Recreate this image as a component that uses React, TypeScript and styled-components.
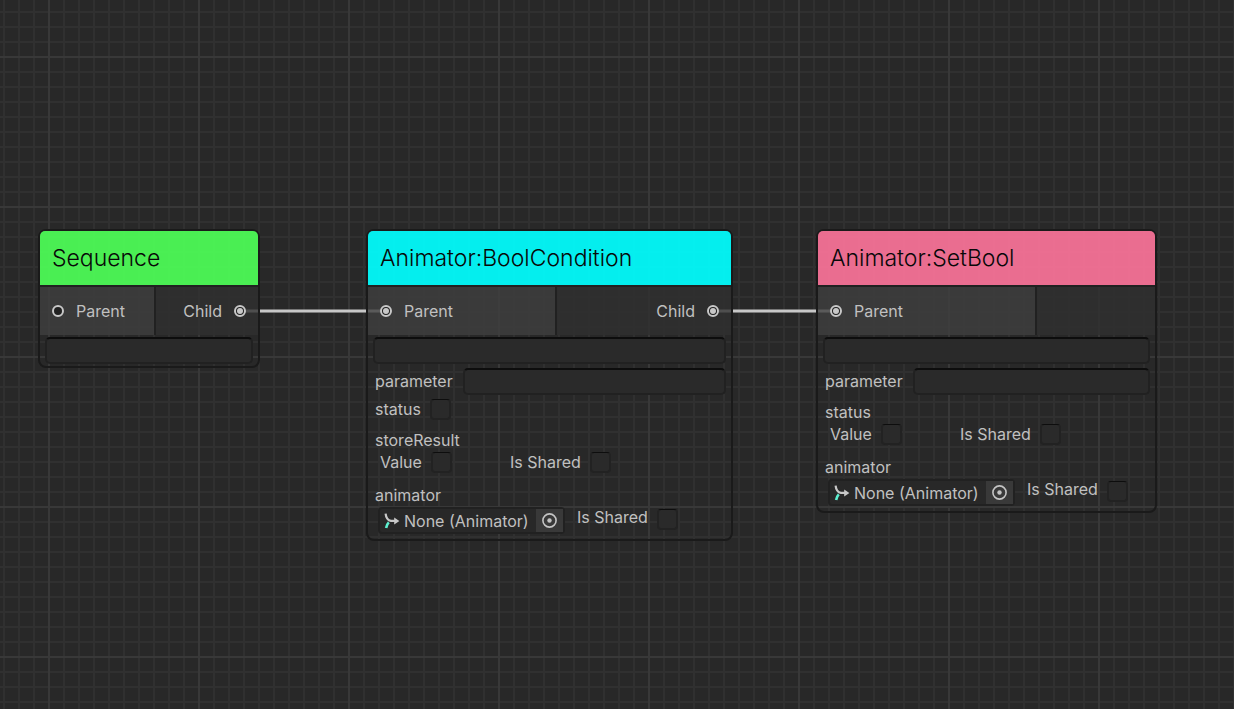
import React, { useId } from "react";
import styled, { createGlobalStyle, css } from "styled-components";

const GlobalStyle = createGlobalStyle`
  *, *::before, *::after { box-sizing: border-box; }
  body {
    margin: 0;
    background: #282828;
    color: #c0c0c0;
    font-family: Inter, "Liberation Sans", sans-serif;
    font-size: 16px;
    font-weight: 400;
    line-height: 20px;
  }
`;

const Canvas = styled.main`
  position: relative;
  min-height: 100vh;
  overflow: hidden;
  background-color: #282828;
  background-image:
    linear-gradient(to right, #383838 2px, transparent 2px),
    linear-gradient(to bottom, #383838 2px, transparent 2px),
    linear-gradient(to right, #303030 2px, transparent 2px),
    linear-gradient(to bottom, #303030 2px, transparent 2px);
  background-size: 150px 150px, 150px 150px, 15px 15px, 15px 15px;
  background-position: 48px 0, 0 56px, 3px 0, 0 11px;
`;

const Edges = styled.svg`
  position: absolute;
  inset: 0;
  width: 100%;
  height: 100%;
  stroke: #c8c8c8;
  stroke-width: 3;
`;

const NodeFrame = styled.section<{ $x: number; $y: number; $width: number }>`
  position: absolute;
  left: ${(p) => p.$x}px;
  top: ${(p) => p.$y}px;
  width: ${(p) => p.$width}px;
  border: 2px solid #1a1a1a;
  border-radius: 8px;
`;

const Title = styled.h2<{ $color: string }>`
  margin: 0;
  padding: 12px;
  border-radius: 5px 5px 0 0;
  background: ${(p) => p.$color};
  color: #080808;
  font-size: 23px;
  font-weight: 350;
  line-height: 30px;
`;

const Ports = styled.div<{ $input: number }>`
  display: grid;
  grid-template-columns: ${(p) => p.$input}px 1fr;
  height: 50px;
  border-top: 2px solid #212121;
`;

const portCell = css`
  display: flex;
  align-items: center;
  gap: 12px;
  padding: 0 12px;
`;

const InputPort = styled.div`
  ${portCell}
  background: rgba(62, 62, 62, 0.8);
`;

const OutputPort = styled.div`
  ${portCell}
  justify-content: flex-end;
  border-left: 2px solid #212121;
  background: rgba(47, 47, 47, 0.8);
  background-clip: padding-box;
`;

const Connector = styled.svg`
  width: 12px;
  height: 12px;
  flex: none;
`;

const Description = styled.div`
  display: flex;
  padding: 2px 5px;
`;

const TextInput = styled.input`
  flex: 1;
  min-width: 0;
  height: 27px;
  padding: 0 6px;
  border: 2px solid #212121;
  border-top-color: #0d0d0d;
  border-radius: 5px;
  background: #2a2a2a;
  color: inherit;
  font: inherit;
  outline: none;
`;

const Fields = styled.div`
  display: flex;
  flex-direction: column;
  gap: 4px;
  padding: 2px 5px 0 7px;
`;

const FieldRow = styled.div`
  display: flex;
  gap: 10px;
`;

const FieldLabel = styled.label`
  padding-top: 3px;
`;

const ToggleRow = styled.div`
  display: flex;
  padding-bottom: 3px;
`;

const Group = styled.fieldset`
  display: flex;
  flex-direction: column;
  gap: 2px;
  min-width: 0;
  margin: 0;
  padding: 3px 0 5px;
  border: 0;
`;

const GroupName = styled.div``;

const SharedRow = styled.div`
  display: grid;
  grid-template-columns: 130px auto;
  justify-content: start;
  padding-left: 5px;
`;

const ObjectRow = styled.div`
  display: flex;
  align-items: flex-start;
  gap: 12px;
  padding-left: 3px;
`;

const ToggleLabel = styled.label<{ $drop: number }>`
  display: flex;
  align-items: flex-start;
  gap: 9px;
  white-space: nowrap;
  input { margin-top: ${(p) => p.$drop}px; }
`;

const Checkbox = styled.input`
  appearance: none;
  width: 21px;
  height: 21px;
  margin: 0;
  border: 2px solid #222222;
  border-top: 1px solid #0d0d0d;
  border-radius: 4px;
  background: #2a2a2a;
  &:checked { background: #5a5a5a; }
`;

const ObjectBox = styled.div`
  display: flex;
  align-items: stretch;
  width: 187px;
  height: 27px;
  border: 2px solid #212121;
  border-radius: 4px;
  background: #282828;
`;

const ObjectValue = styled.span`
  display: flex;
  flex: 1;
  align-items: center;
  gap: 4px;
  padding-left: 4px;
  white-space: nowrap;
`;

const PickerButton = styled.button`
  display: flex;
  align-items: center;
  justify-content: center;
  width: 27px;
  padding: 0;
  border: 0;
  background: #393939;
  color: #c4c4c4;
`;

function PortDot({ connected }: { connected?: boolean }) {
  return (
    <Connector viewBox="0 0 12 12" aria-hidden="true">
      <circle cx="6" cy="6" r="5" fill="#212121" stroke="#c8c8c8" strokeWidth="2" />
      {connected && <circle cx="6" cy="6" r="3" fill="#c8c8c8" />}
    </Connector>
  );
}

function AnimatorIcon() {
  return (
    <svg width="16" height="16" viewBox="0 0 16 16" fill="none" aria-hidden="true">
      <path d="M1.6 0.6C2 4.4 4 7.4 7 7.9H12" stroke="#c8c8c8" strokeWidth="2.2" />
      <path d="M10.2 4.6L15.4 8L10.2 11.4Z" fill="#c8c8c8" />
      <path d="M2.1 15C2.4 12.8 3.2 11 4.8 9.4" stroke="#5df0d0" strokeWidth="2.6" />
    </svg>
  );
}

function Toggle({ label, drop = 0 }: { label: string; drop?: number }) {
  return (
    <ToggleLabel $drop={drop}>
      {label}
      <Checkbox type="checkbox" />
    </ToggleLabel>
  );
}

function TextField({ label }: { label: string }) {
  const id = useId();
  return (
    <FieldRow>
      <FieldLabel htmlFor={id}>{label}</FieldLabel>
      <TextInput id={id} type="text" />
    </FieldRow>
  );
}

function SharedBool({ name }: { name: string }) {
  return (
    <Group aria-label={name}>
      <GroupName>{name}</GroupName>
      <SharedRow>
        <Toggle label="Value" />
        <Toggle label="Is Shared" />
      </SharedRow>
    </Group>
  );
}

function SharedObject({ name, value }: { name: string; value: string }) {
  return (
    <Group aria-label={name}>
      <GroupName>{name}</GroupName>
      <ObjectRow>
        <ObjectBox>
          <ObjectValue>
            <AnimatorIcon />
            {value}
          </ObjectValue>
          <PickerButton type="button" aria-label="Select object">
            <svg width="15" height="15" viewBox="0 0 15 15" aria-hidden="true">
              <circle cx="7.5" cy="7.5" r="6.6" fill="none" stroke="currentColor" strokeWidth="1.6" />
              <circle cx="7.5" cy="7.5" r="2.2" fill="currentColor" />
            </svg>
          </PickerButton>
        </ObjectBox>
        <Toggle label="Is Shared" drop={2} />
      </ObjectRow>
    </Group>
  );
}

interface NodeProps {
  title: string;
  color: string;
  x: number;
  y: number;
  width: number;
  inputWidth: number;
  parentConnected?: boolean;
  hasChild?: boolean;
  children?: React.ReactNode;
}

function GraphNode(props: NodeProps) {
  return (
    <NodeFrame $x={props.x} $y={props.y} $width={props.width}>
      <Title $color={props.color}>{props.title}</Title>
      <Ports $input={props.inputWidth}>
        <InputPort>
          <PortDot connected={props.parentConnected} />
          Parent
        </InputPort>
        <OutputPort>
          {props.hasChild && (
            <>
              Child
              <PortDot connected />
            </>
          )}
        </OutputPort>
      </Ports>
      <Description>
        <TextInput type="text" aria-label={`${props.title} description`} />
      </Description>
      {props.children && <Fields>{props.children}</Fields>}
    </NodeFrame>
  );
}

export default function App() {
  return (
    <>
      <GlobalStyle />
      <Canvas>
        <Edges aria-hidden="true">
          <line x1="240" y1="311" x2="386" y2="311" />
          <line x1="713" y1="311" x2="836" y2="311" />
        </Edges>
        <GraphNode
          title="Sequence"
          color="rgba(77, 251, 86, 0.94)"
          x={38}
          y={229}
          width={222}
          inputWidth={114}
          hasChild
        />
        <GraphNode
          title="Animator:BoolCondition"
          color="rgba(2, 251, 251, 0.94)"
          x={366}
          y={229}
          width={367}
          inputWidth={187}
          parentConnected
          hasChild
        >
          <TextField label="parameter" />
          <ToggleRow>
            <Toggle label="status" />
          </ToggleRow>
          <SharedBool name="storeResult" />
          <SharedObject name="animator" value="None (Animator)" />
        </GraphNode>
        <GraphNode
          title="Animator:SetBool"
          color="rgba(247, 114, 151, 0.94)"
          x={816}
          y={229}
          width={341}
          inputWidth={217}
          parentConnected
        >
          <TextField label="parameter" />
          <SharedBool name="status" />
          <SharedObject name="animator" value="None (Animator)" />
        </GraphNode>
      </Canvas>
    </>
  );
}
